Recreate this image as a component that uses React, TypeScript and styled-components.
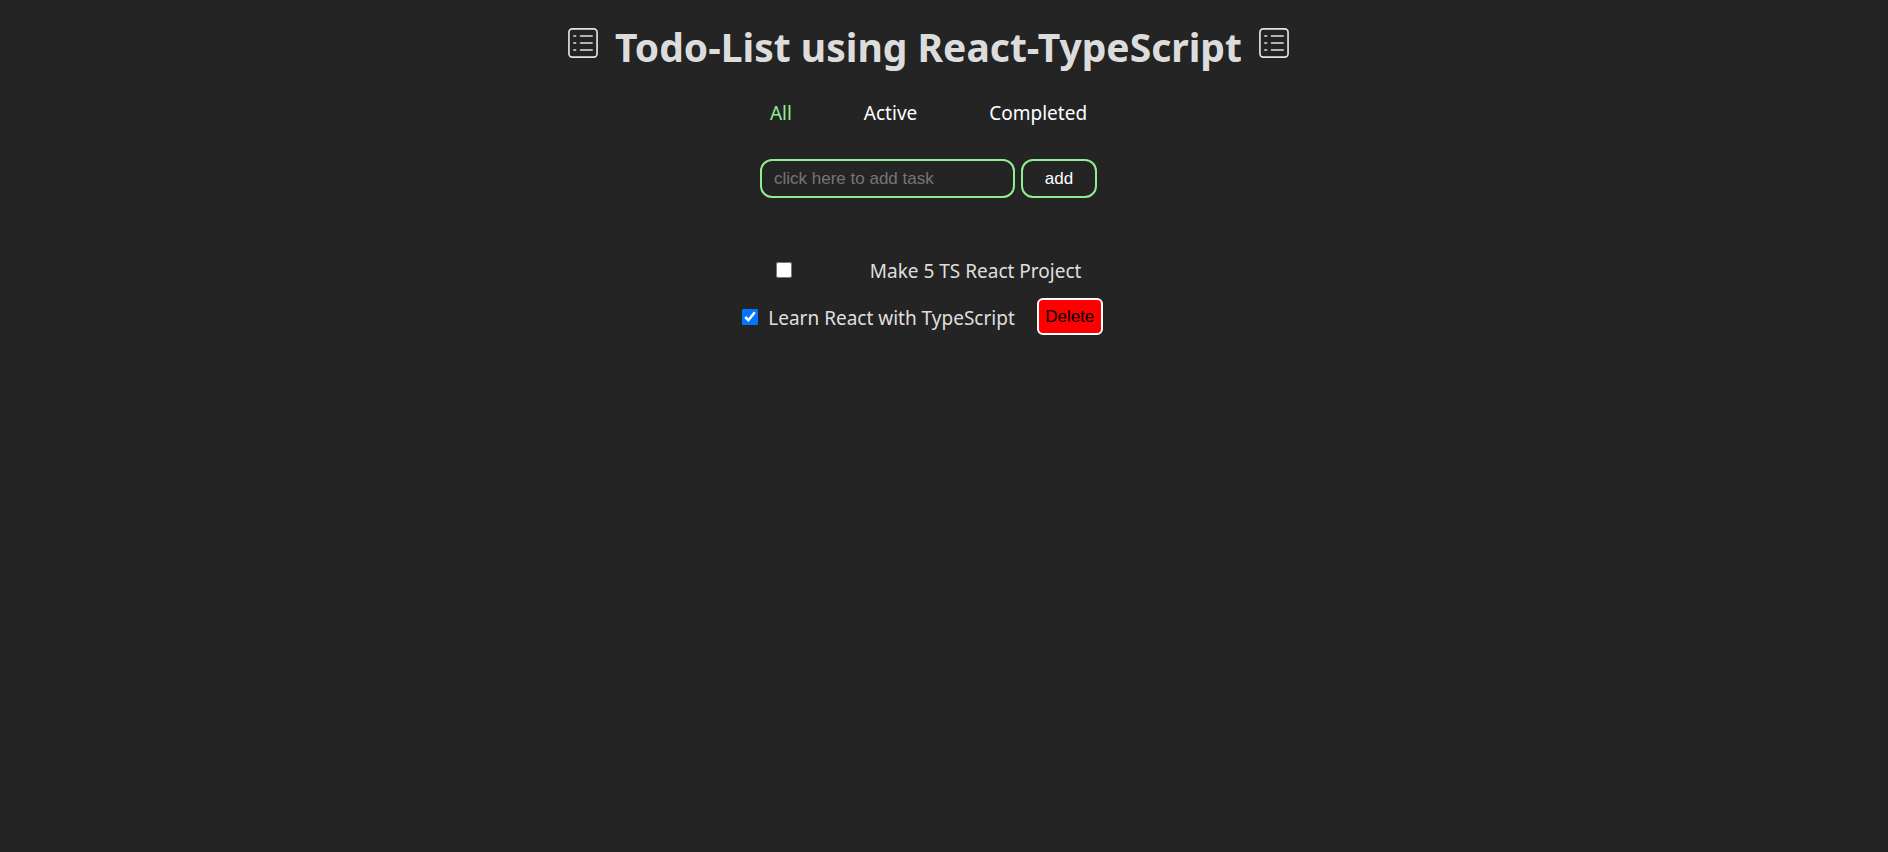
import { useState, type FormEvent } from "react";
import styled, { createGlobalStyle } from "styled-components";
import { CiViewList } from "react-icons/ci";

const GlobalStyle = createGlobalStyle`
  *, *::before, *::after { box-sizing: border-box; }
  body {
    margin: 0;
    min-height: 100vh;
    background: #242424;
    color: rgba(255, 255, 255, 0.87);
    font-family: "Segoe UI", "Noto Sans", "Open Sans", sans-serif;
    font-size: 19px;
    line-height: 26px;
  }
`;

const Page = styled.main`
  display: flex;
  flex-direction: column;
  align-items: center;
  padding: 19px 31px 0 0;
`;

const Title = styled.h1`
  display: flex;
  align-items: flex-start;
  gap: 12px;
  margin: 0;
  font-size: 39px;
  line-height: 56px;
  font-weight: 700;
  white-space: nowrap;

  svg {
    width: 40px;
    height: 40px;
    margin-top: 4px;
  }
`;

const Filters = styled.nav`
  display: flex;
  gap: 72px;
  margin-top: 25px;
`;

const FilterLink = styled.a<{ $active: boolean }>`
  color: ${({ $active }) => ($active ? "lightgreen" : "#ffffff")};
  text-decoration: none;
`;

const AddForm = styled.form`
  display: flex;
  gap: 6px;
  margin-top: 33px;
`;

const TaskInput = styled.input`
  width: 255px;
  height: 39px;
  padding: 0 12px;
  border: 2px solid lightgreen;
  border-radius: 12px;
  background: transparent;
  color: #ffffff;
  font: 17px "Liberation Sans", Arial, sans-serif;

  &::placeholder { color: #757575; }
`;

const AddButton = styled.button`
  width: 76px;
  height: 39px;
  padding: 0;
  border: 2px solid lightgreen;
  border-radius: 12px;
  background: transparent;
  color: #ffffff;
  font: 17px "Liberation Sans", Arial, sans-serif;
`;

const TaskList = styled.ul`
  display: flex;
  flex-direction: column;
  gap: 10px;
  width: 384px;
  margin: 53px 0 0;
  padding: 0;
  list-style: none;
`;

const TaskRow = styled.li<{ $done: boolean }>`
  display: flex;
  align-items: center;
  justify-content: ${({ $done }) => ($done ? "center" : "space-around")};
  gap: ${({ $done }) => ($done ? "10px" : "0")};
  height: 37px;
  padding-right: ${({ $done }) => ($done ? "12px" : "0")};
`;

const Check = styled.input`
  flex-shrink: 0;
  width: 16px;
  height: 16px;
  margin: 0;
`;

const TaskLabel = styled.label`
  padding-top: 2px;
  white-space: nowrap;
`;

const DeleteButton = styled.button`
  flex-shrink: 0;
  width: 66px;
  height: 37px;
  margin-left: 12px;
  padding: 0;
  border: 2px solid #ffffff;
  border-radius: 6px;
  background: #ff0000;
  color: #000000;
  font: 17px "Liberation Sans", Arial, sans-serif;
`;

const filters = ["All", "Active", "Completed"] as const;
type Filter = (typeof filters)[number];
type Task = { id: number; text: string; done: boolean };

const initialTasks: Task[] = [
  { id: 2, text: "Make 5 TS React Project", done: false },
  { id: 1, text: "Learn React with TypeScript", done: true },
];

export default function App() {
  const [tasks, setTasks] = useState(initialTasks);
  const [filter, setFilter] = useState<Filter>("All");
  const [draft, setDraft] = useState("");

  const addTask = (event: FormEvent) => {
    event.preventDefault();
    if (!draft.trim()) return;
    setTasks([{ id: Date.now(), text: draft, done: false }, ...tasks]);
    setDraft("");
  };

  const toggle = (id: number) =>
    setTasks(tasks.map((t) => (t.id === id ? { ...t, done: !t.done } : t)));

  const visible = tasks.filter(
    (t) => filter === "All" || t.done === (filter === "Completed"),
  );

  return (
    <>
      <GlobalStyle />
      <Page>
        <Title>
          <CiViewList aria-hidden />
          Todo-List using React-TypeScript
          <CiViewList aria-hidden />
        </Title>
        <Filters>
          {filters.map((name) => (
            <FilterLink
              key={name}
              href={`#${name.toLowerCase()}`}
              $active={name === filter}
              onClick={() => setFilter(name)}
            >
              {name}
            </FilterLink>
          ))}
        </Filters>
        <AddForm onSubmit={addTask}>
          <TaskInput
            aria-label="New task"
            placeholder="click here to add task"
            value={draft}
            onChange={(e) => setDraft(e.target.value)}
          />
          <AddButton type="submit">add</AddButton>
        </AddForm>
        <TaskList>
          {visible.map((task) => (
            <TaskRow key={task.id} $done={task.done}>
              <Check
                type="checkbox"
                id={`task-${task.id}`}
                checked={task.done}
                onChange={() => toggle(task.id)}
              />
              <TaskLabel htmlFor={`task-${task.id}`}>{task.text}</TaskLabel>
              {task.done && (
                <DeleteButton
                  type="button"
                  onClick={() => setTasks(tasks.filter((t) => t.id !== task.id))}
                >
                  Delete
                </DeleteButton>
              )}
            </TaskRow>
          ))}
        </TaskList>
      </Page>
    </>
  );
}
